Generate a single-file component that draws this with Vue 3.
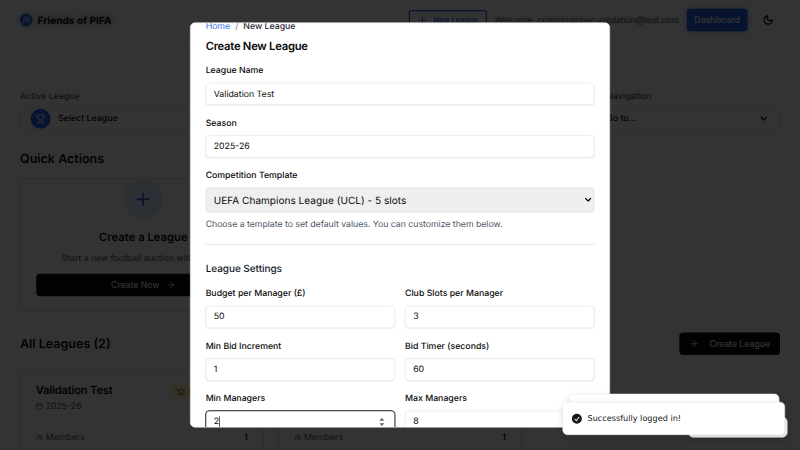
<script setup>
import { ref } from 'vue'

const leagues = [
  { name: 'Validation Test', season: '2025-26', members: 1, role: 'Manager' },
  { name: 'Test League', season: '2025-26', members: 1, role: 'Manager' },
]
const name = ref('Validation Test')
const season = ref('2025-26')
const settings = [
  { label: 'Budget per Manager (£)', value: '50' },
  { label: 'Club Slots per Manager', value: '3' },
  { label: 'Min Bid Increment', value: '1' },
  { label: 'Bid Timer (seconds)', value: '60' },
  { label: 'Min Managers', value: '2', focused: true },
  { label: 'Max Managers', value: '8' },
]
</script>

<template>
  <div class="viewport">
    <div class="screen">
      <div class="page">
        <header class="header">
          <span class="logo">
            <svg viewBox="0 0 24 24" width="14" height="14"><path d="M18 21a8 8 0 0 0-16 0M22 20c0-3.4-2-6.5-4-8a5 5 0 0 0-.5-8.3" /><circle cx="10" cy="8" r="5" /></svg>
          </span>
          <span class="brand">Friends of PIFA</span>
          <button class="btn-new">
            <svg viewBox="0 0 24 24" width="16" height="16"><path d="M5 12h14M12 5v14" /></svg>
            <span>New League</span>
          </button>
          <span class="welcome">Welcome, commissioner-validation@test.com</span>
          <button class="btn-dash">Dashboard</button>
          <span class="moon">
            <svg viewBox="0 0 24 24" width="18" height="18"><path d="M12 3a6 6 0 0 0 9 9 9 9 0 1 1-9-9Z" /></svg>
          </span>
        </header>

        <main class="main">
          <div class="selectors">
            <div class="selector active">
              <div class="selector-label">Active League</div>
              <div class="selector-box">
                <span class="trophy">
                  <svg viewBox="0 0 24 24" width="16" height="16"><path d="M6 9H4.5a2.5 2.5 0 0 1 0-5H6M18 9h1.500a2.500 2.500 0 0 0 0-5H18M4 22h16M10 14.660V17c0 .550-.470.980-.970 1.210C7.850 18.750 7 20.240 7 22M14 14.660V17c0 .550.470.980.970 1.210C16.150 18.750 17 20.240 17 22M18 2H6v7a6 6 0 0 0 12 0V2Z" /></svg>
                </span>
                <span>Select League</span>
              </div>
            </div>
            <div class="selector nav">
              <div class="selector-label">Quick Navigation</div>
              <div class="selector-box">
                <svg viewBox="0 0 24 24" width="16" height="16"><path d="M4 6h16M4 12h16M4 18h16" /></svg>
                <span class="goto">Go to...</span>
                <svg class="chev" viewBox="0 0 24 24" width="16" height="16"><path d="m6 9 6 6 6-6" /></svg>
              </div>
            </div>
          </div>

          <h2 class="section-title">Quick Actions</h2>
          <div class="quick">
            <div class="quick-card">
              <span class="plus"><svg viewBox="0 0 24 24" width="32" height="32"><path d="M5 12h14M12 5v14" /></svg></span>
              <h3>Create a League</h3>
              <p>Start a new football auction with friends</p>
              <button class="btn-dark wide">
                <span>Create Now</span>
                <svg viewBox="0 0 24 24" width="16" height="16"><path d="M5 12h14M12 5l7 7-7 7" /></svg>
              </button>
            </div>
          </div>

          <div class="leagues-head">
            <h2 class="section-title">All Leagues (2)</h2>
            <button class="btn-dark">
              <svg viewBox="0 0 24 24" width="16" height="16"><path d="M5 12h14M12 5v14" /></svg>
              <span>Create League</span>
            </button>
          </div>
          <div class="leagues">
            <div v-for="l in leagues" :key="l.name" class="league">
              <div class="league-top">
                <h3>{{ l.name }}</h3>
                <span class="badge">
                  <svg viewBox="0 0 24 24" width="14" height="14"><path d="m2 5 4 12h12l4-12-6 6-4-8-4 8-6-6ZM5 21h14" /></svg>
                  <span>{{ l.role }}</span>
                </span>
              </div>
              <div class="league-season">
                <svg viewBox="0 0 24 24" width="12" height="12"><rect x="3" y="4" width="18" height="18" rx="2" /><path d="M8 2v4M16 2v4M3 10h18" /></svg>
                <span>{{ l.season }}</span>
              </div>
              <div class="league-row">
                <svg viewBox="0 0 24 24" width="12" height="12"><path d="M18 21a8 8 0 0 0-16 0M22 20c0-3.400-2-6.500-4-8a5 5 0 0 0-.500-8.300" /><circle cx="10" cy="8" r="5" /></svg>
                <span>Members</span>
                <b>{{ l.members }}</b>
              </div>
            </div>
          </div>
        </main>
      </div>

      <div class="overlay">
        <div class="modal">
          <nav class="crumbs"><a>Home</a><i>/</i><span>New League</span></nav>
          <h2 class="modal-title">Create New League</h2>
          <div class="form">
            <label class="field"><span>League Name</span><input v-model="name" /></label>
            <label class="field"><span>Season</span><input v-model="season" /></label>
            <div class="field">
              <span>Competition Template</span>
              <div class="select">
                <span>UEFA Champions League (UCL) - 5 slots</span>
                <svg viewBox="0 0 10 8" width="10" height="8"><path d="M1 1.500 5 5.500 9 1.500" /></svg>
              </div>
              <p class="hint">Choose a template to set default values. You can customize them below.</p>
            </div>
          </div>
          <section class="settings">
            <h3>League Settings</h3>
            <div class="grid">
              <div v-for="s in settings" :key="s.label" class="field">
                <span>{{ s.label }}</span>
                <div class="num" :class="{ focused: s.focused }">
                  <span>{{ s.value }}</span>
                  <template v-if="s.focused">
                    <i class="caret"></i>
                    <svg class="spin" viewBox="0 0 10 16" width="10" height="16"><path d="M1 6 5 1.500 9 6ZM1 10l4 4.500L9 10Z" /></svg>
                  </template>
                </div>
              </div>
            </div>
          </section>
        </div>
      </div>

      <div class="toast third"></div>
      <div class="toast second"></div>
      <div class="toast front">
        <svg viewBox="0 0 20 20" width="20" height="20"><path fill-rule="evenodd" clip-rule="evenodd" d="M10 18a8 8 0 1 0 0-16 8 8 0 0 0 0 16Zm3.857-9.809a.75.75 0 0 0-1.214-.882l-3.483 4.790-1.880-1.880a.75.75 0 1 0-1.060 1.061l2.500 2.500a.75.75 0 0 0 1.137-.089l4-5.500Z" /></svg>
        <span>Successfully logged in!</span>
      </div>
    </div>
  </div>
</template>

<style>
body { margin: 0; overflow: hidden; background: #333; }
</style>

<style scoped>
* { box-sizing: border-box; }
h2, h3, p { margin: 0; }
button { border: 0; font: inherit; }
svg { fill: none; stroke: currentColor; stroke-width: 2; stroke-linecap: round; stroke-linejoin: round; flex: none; }
.viewport { width: 800px; height: 450px; overflow: hidden; }
.screen {
  position: relative; width: 1280px; height: 720px; overflow: hidden;
  transform: scale(0.625); transform-origin: 0 0;
  font: 400 14px/20px Inter, sans-serif; color: #0a0a0a;
  text-rendering: geometricPrecision;
}
.page { width: 1280px; height: 720px; overflow: hidden; background: #fff; }
.header { height: 65px; padding: 0 32px; display: flex; align-items: center; border-bottom: 1px solid #e5e7eb; }
.logo { width: 20px; height: 20px; border-radius: 50%; background: #2563eb; color: #fff; display: grid; place-items: center; box-shadow: 0 0 8px #2563eb88; }
.brand { margin-left: 8px; font-size: 16px; font-weight: 700; letter-spacing: 0.08px; text-shadow: 0 0 12px #0008; margin-right: auto; }
.btn-new { width: 125px; height: 32px; padding: 0 12px; display: flex; align-items: center; justify-content: space-between; background: #fff; border: 2px solid #2563eb; border-radius: 4px; color: #2563eb; font-size: 12px; font-weight: 500; }
.welcome { width: 295px; white-space: nowrap; margin: 0 12px 0 13px; color: #4b5563; letter-spacing: -0.2px; text-shadow: 0 0 10px #0003; }
.btn-dash { width: 97px; height: 36px; padding: 0; border-radius: 6px; background: #2563eb; color: #fff; font-weight: 500; box-shadow: 0 0 10px #2563eb88; }
.moon { width: 36px; height: 36px; margin-left: 16px; padding-right: 3px; display: grid; place-items: center; }
.moon svg { stroke-width: 2.6; }
.main { padding: 79px 32px 0; }
.selectors { display: flex; justify-content: space-between; }
.selector { width: 320px; }
.selector-label { font-weight: 500; color: #4b5563; margin-bottom: 8px; }
.selector-box { height: 36px; display: flex; align-items: center; gap: 12px; padding: 0 16px; border: 1px solid #d1d5db; border-radius: 6px; font-weight: 500; }
.nav .selector-box { gap: 9px; padding-right: 17px; }
.chev { stroke-width: 3; }
.goto { flex: 1; }
.trophy { width: 32px; height: 32px; border-radius: 50%; background: #2563eb; color: #fff; display: grid; place-items: center; }
.section-title { font-size: 20px; line-height: 28px; font-weight: 600; }
.selectors + .section-title { margin-top: 32px; }
.quick { display: grid; grid-template-columns: repeat(3, 1fr); gap: 16px; margin-top: 17px; }
.quick-card { height: 213px; padding: 0 24px; border: 2px solid #d9dbe0; border-radius: 8px; display: flex; flex-direction: column; align-items: center; }
.plus { width: 64px; height: 64px; border-radius: 50%; background: #dbeafe; color: #2563eb; display: grid; place-items: center; }
.quick-card h3 { margin-top: 15px; font-size: 18px; line-height: 28px; font-weight: 600; }
.quick-card p { margin-top: 9px; color: #4b5563; letter-spacing: -0.04px; }
.btn-dark { height: 36px; padding: 0 16px; display: flex; align-items: center; justify-content: center; gap: 16px; border-radius: 6px; background: #0a0a0a; color: #fff; font-weight: 500; letter-spacing: -0.08px; }
.wide { width: 100%; margin-top: 15px; gap: 10px; font-weight: 400; }
.leagues-head { margin-top: 34px; display: flex; align-items: center; justify-content: space-between; }
.leagues { display: grid; grid-template-columns: repeat(3, 1fr); gap: 24px; margin-top: 25px; }
.league { height: 200px; padding: 18px 24px; border: 1px solid #d5d7db; border-radius: 8px; box-shadow: 0 1px 3px #0002; }
.league-top { display: flex; align-items: center; justify-content: space-between; }
.league-top h3 { font-size: 18px; line-height: 28px; font-weight: 600; letter-spacing: -0.35px; }
.badge { width: 122px; height: 24px; display: flex; align-items: center; gap: 6px; padding: 0 8px; border-radius: 6px; background: #fef3c7; color: #b45309; font-size: 12px; font-weight: 600; }
.league-season { display: flex; align-items: center; gap: 4px; color: #4b5563; }
.league-row { margin-top: 30px; display: flex; align-items: center; gap: 4px; color: #4b5563; }
.league-row b { margin-left: auto; color: #0a0a0a; font-weight: 600; }

.overlay { position: absolute; inset: 0; display: grid; place-items: center; background: rgba(0, 0, 0, 0.8); }
.modal { width: 672px; height: 648px; padding: 0 24px; overflow: hidden; border: 1px solid #e5e5e5; border-radius: 8px; background: #fff; }
.crumbs { display: flex; gap: 8px; margin-top: -5px; }
.crumbs a { color: #3b6fe8; }
.crumbs i { font-style: normal; color: #6b7280; }
.crumbs span { font-weight: 500; color: #1f2937; }
.modal-title { margin-top: 14px; font-size: 18px; line-height: 18px; font-weight: 600; letter-spacing: -0.42px; }
.form { margin-top: 19px; display: grid; gap: 19px; }
.field { display: flex; flex-direction: column; font-weight: 500; }
.field > span { height: 20px; margin-bottom: 9px; }
.field input, .num {
  width: 100%; height: 36px; margin: 0; padding: 0 12px; border: 1px solid #e3e3e5; border-radius: 6px; outline: 0;
  background: #fff; box-shadow: 0 1px 2px #0000000d; font: 400 14px/20px Inter, sans-serif; color: #0a0a0a;
  text-rendering: geometricPrecision;
}
.num { display: flex; align-items: center; }
.num.focused { border-color: #333; box-shadow: 0 0 0 0.7px #333; }
.caret { width: 1.5px; height: 18px; background: #000; }
.spin { margin-left: auto; margin-right: 3px; fill: #666; stroke: none; }
.select { height: 40px; padding: 0 4px 0 12px; display: flex; align-items: center; justify-content: space-between; border: 1px solid #d8d8dc; border-radius: 6px; background: #efefef; font-size: 16px; font-weight: 400; letter-spacing: 0.06px; }
.hint { margin-top: 9px; color: #4b5563; font-weight: 400; letter-spacing: -0.05px; }
.settings { margin-top: 22px; padding-top: 25px; border-top: 1px solid #dcdee2; }
.settings h3 { font-size: 16px; line-height: 24px; font-weight: 500; color: #111827; letter-spacing: -0.08px; }
.grid { margin-top: 19px; display: grid; grid-template-columns: 1fr 1fr; gap: 19px 16px; }

.toast { position: absolute; border-radius: 8px; background: #fff; border: 1px solid #ededed; box-shadow: 0 4px 12px rgba(0, 0, 0, 0.1); }
.third { left: 1101px; top: 667px; width: 159px; height: 33px; background: #f1f1f1; }
.second { left: 910px; top: 630px; width: 337px; height: 53px; }
.front { left: 900px; top: 643px; width: 356px; height: 53px; padding: 0 16px 0 12px; display: flex; align-items: center; gap: 7px; font: 500 13px/20px "DejaVu Sans", sans-serif; color: #171717; }
.front svg { fill: #171717; stroke: none; }
</style>
